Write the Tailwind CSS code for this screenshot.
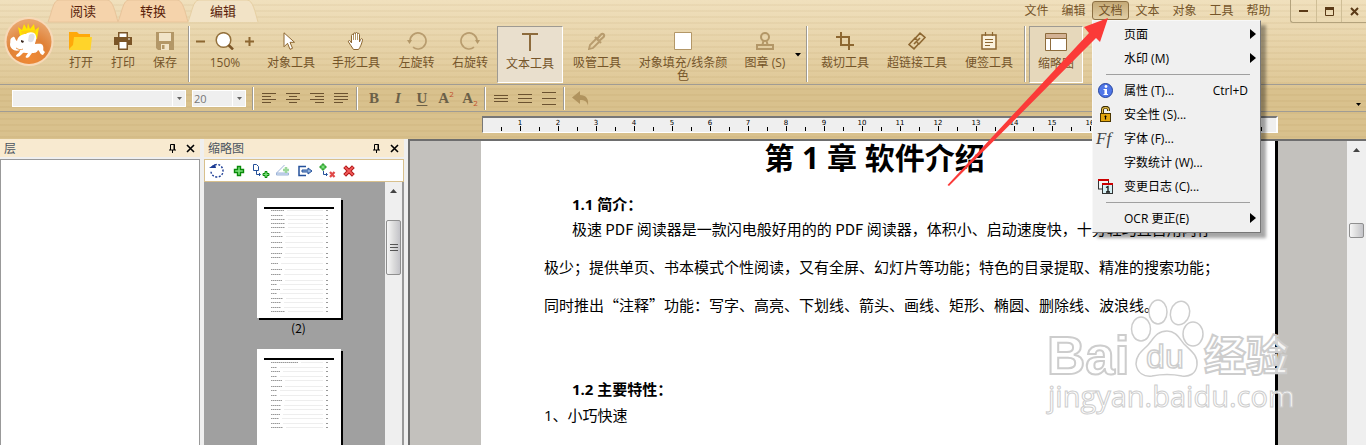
<!DOCTYPE html>
<html lang="zh-CN">
<head>
<meta charset="utf-8">
<title>极速 PDF 编辑器</title>
<script src="https://cdn.jsdelivr.net/npm/@tailwindcss/browser@4"></script>
</head>
<body class="h-screen overflow-hidden bg-[#efefef] font-['Open_Sans','Noto_Sans_CJK_SC',sans-serif] text-[12px] leading-[13px] text-[#75552a]">
<div class="relative flex h-full flex-col overflow-hidden">

  <header class="relative z-10 shrink-0 bg-[linear-gradient(#f0e0bd,#dfc897_84px,#d9c18d_90px,#d9c18d)]">
    <div class="pointer-events-none absolute inset-0 bg-[repeating-linear-gradient(transparent_0px,transparent_4px,rgba(130,90,20,0.05)_4px,rgba(130,90,20,0.05)_6px)]"></div>

    <div class="relative z-10 flex h-[84px]">
      <!-- application button -->
      <button class="mt-[17px] ml-[4px] h-[50px] w-[50px] shrink-0" aria-label="主菜单">
        <svg viewBox="0 0 50 50" class="h-[50px] w-[50px]">
          <defs><radialGradient id="lg" cx="50%" cy="85%" r="80%"><stop offset="0" stop-color="#f08a35"/><stop offset=".55" stop-color="#e08238"/><stop offset="1" stop-color="#e9a56c"/></radialGradient></defs>
          <circle cx="25" cy="24.500" r="24.500" fill="#f7d9b8"/>
          <circle cx="25" cy="24.500" r="22.500" fill="url(#lg)"/>
          <path d="M14 10l4 3 2-6 3 5 1-6 2 6 4-5 1 6 4-3-2 12-8 2-8-1z" fill="#ffe500"/>
          <path d="M17 14l15-1-1 6-12 2z" fill="#ffcf10"/>
          <path d="M9 20c2-1 2 3 4 4 1-5 5-7 9-7 2-2 9-3 10 2 1 4-1 6-1 8 4 0 7-1 8 2 1 3-1 4 2 6l-2 3c-3 0-3-4-5-5-1 3-4 3-6 3l-3 4c-3 2-4 0-3-1l2-3c-3 0-5-1-6 1-2 2-4 4-6 2 0-2 4-3 4-6-5 2-10-1-10-6 1-3-1-5 3-7z" fill="#fff"/>
          <path d="M25 18c4-3 7 0 5 4-1 4-4 4-6 2" fill="#dfe0e6"/>
          <path d="M17 23l3 1-1 2-2-1z" fill="#3c2a20"/><path d="M12 31c3 2 5 2 7 1" stroke="#e79a54" fill="none"/>
        </svg>
      </button>

      <div class="flex min-w-0 flex-1 flex-col">
        <div class="flex h-[26px] shrink-0 items-start">
          <nav class="-ml-[6px] flex text-[13px] text-[#5a1e0a]">
            <button class="relative h-[22px] w-[70px]"><svg class="absolute inset-0 overflow-visible" width="70" height="22"><path d="M0 22C4 12 5 0 11 0H59C65 0 67 12 70 22z" fill="#f5d3ab" stroke="#e8c49a"/></svg><span class="relative">阅读</span></button>
            <button class="relative h-[22px] w-[70px]"><svg class="absolute inset-0 overflow-visible" width="70" height="22"><path d="M0 22C4 12 5 0 11 0H59C65 0 67 12 70 22z" fill="#f5d3ab" stroke="#e8c49a"/></svg><span class="relative">转换</span></button>
            <button class="relative h-[22px] w-[70px]"><svg class="absolute inset-0 overflow-visible" width="70" height="22"><path d="M0 22C4 12 5 0 11 0H59C65 0 67 12 70 22" fill="#f2e3c6" stroke="#e6cfa2"/></svg><span class="relative">编辑</span></button>
          </nav>
          <div class="flex-1"></div>
          <nav class="flex h-[20px] items-center">
            <button class="h-[20px] w-[37px]">文件</button>
            <button class="h-[20px] w-[37px]">编辑</button>
            <div class="relative">
              <button class="mt-[1px] h-[19px] w-[37px] rounded-[3px] border border-[#8c7044] bg-[linear-gradient(#c4a976,#e2cfa6)]">文档</button>
              <!-- document menu -->
              <div role="menu" class="absolute top-[20px] left-0 w-[169px] border border-[#f8f8f8] border-r-[#777] border-b-[#777] bg-[#f0f0f0] pt-px pb-[2px] text-black shadow-[5px_5px_3px_rgba(0,0,0,0.35)]">
                <button role="menuitem" class="flex h-[24px] w-full items-center pr-[4px] pl-[31px]"><span class="flex-1 text-left">页面</span><svg width="6" height="10"><path d="M0 0l6 5-6 5z"/></svg></button>
                <button role="menuitem" class="flex h-[24px] w-full items-center pr-[4px] pl-[31px]"><span class="flex-1 text-left">水印 (M)</span><svg width="6" height="10"><path d="M0 0l6 5-6 5z"/></svg></button>
                <div class="mt-[4px] mr-[10px] mb-[3px] ml-[13px] h-px bg-[#a0a0a0]"></div>
                <button role="menuitem" class="flex h-[24px] w-full items-center pr-[12px] pl-[5px]">
                  <svg class="mr-[11px]" width="15" height="15" viewBox="0 0 15 15"><circle cx="7.500" cy="7.500" r="7" fill="#4f76e8" stroke="#24439c"/><circle cx="8" cy="3.500" r="1.400" fill="#fff"/><path d="M5.500 6H9v5h1v1H5.500v-1h1V7h-1z" fill="#fff"/></svg>
                  <span class="flex-1 text-left">属性 (T)...</span><span>Ctrl+D</span></button>
                <button role="menuitem" class="flex h-[24px] w-full items-center pl-[5px]">
                  <svg class="mr-[11px]" width="15" height="16" viewBox="0 0 15 16"><path d="M4.500 8V3.500c0-3 6-3 6 0V5" fill="none" stroke="#3a2a00" stroke-width="3"/><path d="M4.500 8V3.500c0-2.500 6-2.500 6 0V5" fill="none" stroke="#e8c44c" stroke-width="1.200"/><rect x="2.500" y="7.500" width="10" height="8" fill="#e3a60d" stroke="#4a3500"/><path d="M7.500 9.500v4M6.500 10.500h2" stroke="#000" stroke-width="1.200"/></svg>
                  安全性 (S)...</button>
                <button role="menuitem" class="flex h-[24px] w-full items-center pl-[3px]"><span class="w-[28px] text-left font-['Liberation_Serif',serif] text-[17px] text-[#444] italic">Ff</span>字体 (F)...</button>
                <button role="menuitem" class="flex h-[24px] w-full items-center pl-[31px]">字数统计 (W)...</button>
                <button role="menuitem" class="flex h-[24px] w-full items-center pl-[5px]">
                  <svg class="mr-[11px]" width="15" height="15" viewBox="0 0 15 15"><rect x=".5" y="1" width="10" height="9" fill="#f4f4f4" stroke="#333"/><path d="M0 1h11" stroke="#c00" stroke-width="2"/><rect x="4.500" y="5" width="10" height="9.500" fill="#d6f0f4" stroke="#333"/><path d="M4 5h11" stroke="#c00" stroke-width="2"/><path d="M8 8.500l2-1V13M8 13h4" stroke="#111" fill="none" stroke-width="1.300"/></svg>
                  变更日志 (C)...</button>
                <div class="mt-[4px] mr-[10px] mb-[3px] ml-[13px] h-px bg-[#a0a0a0]"></div>
                <button role="menuitem" class="flex h-[24px] w-full items-center pr-[4px] pl-[31px]"><span class="flex-1 text-left">OCR 更正(E)</span><svg width="6" height="10"><path d="M0 0l6 5-6 5z"/></svg></button>
              </div>
            </div>
            <button class="h-[20px] w-[37px]">文本</button>
            <button class="h-[20px] w-[37px]">对象</button>
            <button class="h-[20px] w-[37px]">工具</button>
            <button class="h-[20px] w-[37px]">帮助</button>
          </nav>
          <div class="ml-[13px] flex h-[23px] rounded-bl-[3px] border-b border-l border-[#b3a27c]">
            <button aria-label="最小化" class="grid w-[25px] place-items-center"><svg width="9" height="9"><path d="M0 4h9" stroke="#5b3a17" stroke-width="2"/></svg></button>
            <button aria-label="最大化" class="grid w-[25px] place-items-center border-l border-[#cfbe96]"><svg width="9" height="9"><path d="M.5 1h8v7.500h-8z" fill="none" stroke="#5b3a17"/><path d="M0 1.500h9" stroke="#5b3a17" stroke-width="3"/></svg></button>
            <button aria-label="关闭" class="grid w-[25px] place-items-center border-l border-[#cfbe96]"><svg width="9" height="9"><path d="M1 1l7 7M8 1L1 8" stroke="#5b3a17" stroke-width="2"/></svg></button>
          </div>
        </div>

        <!-- main toolbar -->
        <div class="ml-[6px] flex h-[57px] shrink-0 items-start">
          <button class="flex w-[42px] shrink-0 flex-col items-center gap-[6px] pt-[6px]"><svg width="24" height="18" viewBox="0 0 24 18"><path d="M0 0h8l2 2h11v15H0z" fill="#ffa90a"/><path d="M5 5h18l-1.500 13H0v-1L4 13z" fill="#ffd42a"/></svg>打开</button>
          <button class="flex w-[42px] shrink-0 flex-col items-center gap-[6px] pt-[6px]"><svg width="18" height="18" viewBox="0 0 18 18"><path d="M4 0h10v5H4z" fill="#7b5527"/><path d="M5.500 1.500h7V5h-7z" fill="#fff"/><path d="M0 5h18v8H0z" fill="#7b5527"/><path d="M4 9h10v9H4z" fill="#7b5527"/><path d="M5.500 10h7v6.500h-7z" fill="#fff"/><path d="M14 7h2" stroke="#fff"/></svg>打印</button>
          <button class="flex w-[42px] shrink-0 flex-col items-center gap-[6px] pt-[6px]"><svg width="18" height="18" viewBox="0 0 18 18"><path d="M0 0h18v18H2l-2-2z" fill="#b39767"/><path d="M3 1h12v8H3z" fill="#f1e4c8"/><path d="M5 12h8v6H5z" fill="#f1e4c8"/><path d="M6 13h2.500v4H6z" fill="#b39767"/></svg>保存</button>
          <div class="ml-[2px] h-[56px] w-[2px] shrink-0 border-r border-white bg-[#9e9a92]"></div>
          <div class="flex w-[70px] shrink-0 flex-col items-center gap-[6px] pt-[6px]">
            <div class="flex h-[18px] items-center gap-[10px]">
              <button aria-label="缩小"><svg width="9" height="9"><path d="M0 4.500h9" stroke="#8d6731" stroke-width="2"/></svg></button>
              <button aria-label="缩放"><svg width="20" height="18" viewBox="0 0 20 18"><circle cx="8.500" cy="8" r="7.300" fill="#fff" stroke="#94713c" stroke-width="1.500"/><path d="M13.500 13l4.500 4.500" stroke="#7b5527" stroke-width="2.500"/></svg></button>
              <button aria-label="放大"><svg width="9" height="9"><path d="M0 4.500h9M4.500 0v9" stroke="#8d6731" stroke-width="2"/></svg></button>
            </div>150%</div>
          <button class="flex w-[62px] shrink-0 flex-col items-center gap-[6px] pt-[6px]"><svg width="18" height="18" viewBox="0 0 18 18"><path d="M2 .8v14l3.500-3.500 2.500 6 2.500-1-2.500-6h4.500z" fill="#fff" stroke="#8d6731"/></svg>对象工具</button>
          <button class="flex w-[68px] shrink-0 flex-col items-center gap-[6px] pt-[6px]"><svg width="18" height="18" viewBox="0 0 18 18"><path d="M4.500 11V3.500c0-1.500 2-1.500 2 0V2c0-1.500 2-1.500 2 0V1.500c0-1.500 2-1.500 2 0V2.500c0-1.500 2-1.500 2 0V10l1-2.500c.7-1.500 2.500-.8 2 .7-1 4-2 6.500-4 9.300H6.500C5 15 3 12.500 1.500 10c-.7-1.500 1-2 1.800-1z" fill="#fff" stroke="#8d6731"/><path d="M6.500 3v5M8.500 2v6M10.500 2v6" stroke="#b39767"/></svg>手形工具</button>
          <button class="flex w-[53px] shrink-0 flex-col items-center gap-[6px] pt-[6px]"><svg width="20" height="18" viewBox="0 0 20 18"><path d="M3 9a8 8 0 1 1 3 6.200" fill="none" stroke="#b89c6e" stroke-width="1.700"/><path d="M0 8h5l-2.500 4z" fill="#b39767"/></svg>左旋转</button>
          <button class="flex w-[54px] shrink-0 flex-col items-center gap-[6px] pt-[6px]"><svg width="20" height="18" viewBox="0 0 20 18"><path d="M17 9a8 8 0 1 0-3 6.200" fill="none" stroke="#b89c6e" stroke-width="1.700"/><path d="M15 8h5l-2.500 4z" fill="#b39767"/></svg>右旋转</button>
          <button class="flex h-[57px] w-[66px] shrink-0 flex-col items-center gap-[6px] border border-white border-t-[#9e9a92] border-l-[#9e9a92] bg-[#e9dfcd] pt-[6px]"><svg width="16" height="18"><path d="M0 1h16M8 1v17" stroke="#8d6b3c" stroke-width="2" fill="none"/></svg>文本工具</button>
          <button class="flex w-[68px] shrink-0 flex-col items-center gap-[6px] pt-[6px]"><svg width="18" height="18" viewBox="0 0 18 18"><path d="M8 7l-6 6-1 4 4-1 6-6" fill="none" stroke="#b89c6e" stroke-width="1.800"/><path d="M7 5l6 6M9 7l4-4.500c2-2 4 .5 2.500 2.500L11 9" fill="none" stroke="#b89c6e" stroke-width="2.200"/></svg>吸管工具</button>
          <button class="flex w-[104px] shrink-0 flex-col items-center gap-[6px] px-[4px] pt-[6px]"><svg width="18" height="18"><path d="M.5.500h17v17H.5z" fill="#fff" stroke="#b39767"/></svg><span class="w-[92px] break-all">对象填充/线条颜色</span></button>
          <button class="flex w-[60px] shrink-0 flex-col items-center gap-[6px] pt-[6px]"><svg width="18" height="18" viewBox="0 0 18 18" fill="none" stroke="#b39767" stroke-width="2"><circle cx="9" cy="5" r="4"/><path d="M7.500 9l-1 3.500M10.500 9l1 3.500M1 13h16v4H1z"/></svg>图章 (S)</button>
          <button aria-label="图章选项" class="mt-[26px] h-[5px] w-[8px] shrink-0"><svg width="6" height="4"><path d="M0 0h6L3 3.500z" fill="#000"/></svg></button>
          <div class="ml-[3px] h-[56px] w-[2px] shrink-0 border-r border-white bg-[#9e9a92]"></div>
          <button class="ml-[2px] flex w-[70px] shrink-0 flex-col items-center gap-[6px] pt-[6px]"><svg width="18" height="18"><path d="M5 0v13h13M0 5h13v13" fill="none" stroke="#8d6731" stroke-width="2"/></svg>裁切工具</button>
          <button class="flex w-[74px] shrink-0 flex-col items-center gap-[6px] pt-[6px]"><svg width="18" height="18" viewBox="0 0 18 18" fill="none" stroke="#8d6731" stroke-width="1.600"><path d="M7.500 6l4.500-4.800 5 4.300-6 6.500-2-1.700M10.500 12l-4.500 4.800-5-4.300 6-6.500 2 1.700M6 12l6-6"/></svg>超链接工具</button>
          <button class="flex w-[70px] shrink-0 flex-col items-center gap-[6px] pt-[6px]"><svg width="18" height="18" viewBox="0 0 18 18"><path d="M2 3h14v14H2z" fill="#fbf2dd" stroke="#8d6731" stroke-width="1.500"/><path d="M5.500 0v4M12.500 0v4M5 7.500h8M5 10.500h8M5 13.500h5" stroke="#8d6731" stroke-width="1.200"/></svg>便签工具</button>
          <div class="h-[56px] w-[2px] shrink-0 border-r border-white bg-[#9e9a92]"></div>
          <button class="ml-[3px] flex h-[57px] w-[54px] shrink-0 flex-col items-center gap-[6px] border border-white border-t-[#9e9a92] border-l-[#9e9a92] bg-[#e6d8bb] pt-[6px]"><svg width="22" height="18"><path d="M.5.500h21v17H.5z" fill="#fff" stroke="#8d6b3c"/><path d="M1 1h20v4H1z" fill="#d3b294"/><path d="M1 5.500h20M5.500 6v12" stroke="#8d6b3c"/></svg>缩略图</button>
        </div>
      </div>
    </div>

    <!-- text format bar -->
    <div class="relative flex h-[28px] items-center border-t border-b border-[#a09c94] text-[#6b5230]">
      <div class="relative ml-[12px] flex h-[17px] w-[174px] border border-white bg-[#efefef]"><select aria-label="字体" class="w-full appearance-none pl-[2px] outline-none"><option></option></select><span class="pointer-events-none absolute top-0 right-0 grid h-full w-[13px] place-items-center border-l border-white"><svg width="5" height="3"><path d="M0 0h5L2.500 3z" fill="#666"/></svg></span></div>
      <div class="relative ml-[6px] flex h-[17px] w-[54px] border border-white bg-[#efefef]"><select aria-label="字号" class="w-full appearance-none pl-[1px] text-[11px] text-[#777] outline-none"><option>20</option></select><span class="pointer-events-none absolute top-0 right-0 grid h-full w-[13px] place-items-center border-l border-white"><svg width="5" height="3"><path d="M0 0h5L2.500 3z" fill="#666"/></svg></span></div>
      <div class="mr-[3px] ml-[6px] h-[23px] w-[2px] border-r border-white bg-[#9e9a92]"></div>
      <button class="grid w-[24px] place-items-center" aria-label="左对齐"><svg width="14" height="11" stroke="#6b5230"><path d="M0 .5h14M0 3.500h9M0 6.500h14M0 9.500h9"/></svg></button>
      <button class="grid w-[24px] place-items-center" aria-label="居中"><svg width="14" height="11" stroke="#6b5230"><path d="M0 .5h14M3 3.500h8M0 6.500h14M3 9.500h8"/></svg></button>
      <button class="grid w-[24px] place-items-center" aria-label="右对齐"><svg width="14" height="11" stroke="#6b5230"><path d="M0 .5h14M5 3.500h9M0 6.500h14M5 9.500h9"/></svg></button>
      <button class="grid w-[24px] place-items-center" aria-label="两端对齐"><svg width="14" height="11" stroke="#6b5230"><path d="M0 .5h14M0 3.500h14M0 6.500h14M0 9.500h9"/></svg></button>
      <div class="mr-[4px] ml-[3px] h-[23px] w-[2px] border-r border-white bg-[#9e9a92]"></div>
      <div class="flex font-['Liberation_Serif',serif] text-[15px] leading-[17px] font-bold text-[#6b6048]">
        <button class="w-[24px]" aria-label="粗体">B</button>
        <button class="w-[24px] italic" aria-label="斜体">I</button>
        <button class="w-[24px] underline underline-offset-2" aria-label="下划线">U</button>
        <button class="flex w-[24px] justify-center" aria-label="上标">A<span class="font-['Open_Sans',sans-serif] text-[8px] leading-[8px] font-normal text-[#c0502c]">2</span></button>
        <button class="flex w-[24px] items-end justify-center" aria-label="下标">A<span class="font-['Open_Sans',sans-serif] text-[8px] leading-[8px] font-normal text-[#c0502c]">2</span></button>
      </div>
      <div class="mr-[3px] ml-[2px] h-[23px] w-[2px] border-r border-white bg-[#9e9a92]"></div>
      <button class="grid w-[24px] place-items-center" aria-label="单倍行距"><svg width="14" height="13" stroke="#6b5230"><path d="M0 3.500h14M0 6.500h14M0 9.500h14"/></svg></button>
      <button class="grid w-[24px] place-items-center" aria-label="1.5 倍行距"><svg width="14" height="13" stroke="#6b5230"><path d="M0 2.500h14M0 6.500h14M0 10.500h14"/></svg></button>
      <button class="grid w-[24px] place-items-center" aria-label="双倍行距"><svg width="14" height="13" stroke="#6b5230"><path d="M0 .5h14M0 6.500h14M0 12.500h14"/></svg></button>
      <div class="mr-[7px] ml-[2px] h-[23px] w-[2px] border-r border-white bg-[#9e9a92]"></div>
      <button aria-label="撤销"><svg width="17" height="15" viewBox="0 0 17 15"><path d="M0 6.500L8 0v4c6 0 9 4 8 10.500-1-4-3-5.500-8-5.500v4z" fill="#b0935e"/></svg></button>
      <div class="flex-1"></div>
      <button aria-label="更多" class="mt-[12px] mr-[5px]"><svg width="5" height="3"><path d="M0 0h5L2.500 3z" fill="#000"/></svg></button>
    </div>

    <!-- horizontal ruler -->
    <div class="relative flex h-[27px] pt-[4px] pr-[88px] pl-[482px]">
      <div class="h-[17px] min-w-0 flex-1 overflow-hidden border-t-2 border-r-2 border-b border-l border-t-[#777] border-r-[#fff] border-b-[#fff] border-l-[#777] bg-[#efefef]">
        <svg id="ruler" class="h-[14px] w-full font-['DejaVu_Sans',sans-serif] text-[7px]"></svg>
      </div>
    </div>
  </header>

  <main class="relative flex min-h-0 flex-1">
    <!-- layers panel -->
    <section class="flex w-[200px] shrink-0 flex-col">
      <div class="flex h-[18px] shrink-0 items-center bg-[#f8ead0] pr-[5px] pl-[4px] text-[#4b5560]"><h2 class="flex-1">层</h2>
        <button aria-label="固定" class="mr-[9px]"><svg width="8" height="9"><path d="M1.500 6V.500h4V6M5 0v6M0 6h7M3.500 6v3" stroke="#000" fill="none"/></svg></button>
        <button aria-label="关闭层"><svg width="9" height="9"><path d="M1 1l7 7M8 1L1 8" stroke="#000" stroke-width="1.600"/></svg></button></div>
      <div class="mt-[2px] flex-1 border border-b-0 border-[#999] bg-white"></div>
    </section>

    <!-- thumbnails panel -->
    <section class="ml-[4px] flex w-[200px] shrink-0 flex-col">
      <div class="flex h-[18px] shrink-0 items-center bg-[#f8ead0] pr-[5px] pl-[4px] text-[#4b5560]"><h2 class="flex-1">缩略图</h2>
        <button aria-label="固定" class="mr-[9px]"><svg width="8" height="9"><path d="M1.500 6V.500h4V6M5 0v6M0 6h7M3.500 6v3" stroke="#000" fill="none"/></svg></button>
        <button aria-label="关闭缩略图"><svg width="9" height="9"><path d="M1 1l7 7M8 1L1 8" stroke="#000" stroke-width="1.600"/></svg></button></div>
      <div class="mt-[2px] flex h-[23px] shrink-0 items-center border border-[#d8c08c] bg-white pl-[4px]">
        <button aria-label="旋转" class="w-[22px]"><svg width="16" height="16" viewBox="0 0 16 16"><path d="M3 4c4-5 11-2 11 4 0 8-12 8-12 0" fill="none" stroke="#1c3c94" stroke-width="1.400" stroke-dasharray="2 1.500"/><path d="M0 5l6-4 1 4z" fill="#1c3c94"/></svg></button>
        <button aria-label="添加" class="w-[22px]"><svg width="16" height="16" viewBox="0 0 16 16"><path d="M6.500 3.500h3v3h3v3h-3v3h-3v-3h-3v-3h3z" fill="#7be07b" stroke="#0a8a0a" stroke-width="1.400"/></svg></button>
        <button aria-label="插入页" class="w-[22px]"><svg width="17" height="16" viewBox="0 0 17 16"><path d="M.500 1.500h3l2 2v4h-5zM3.500 8v3.500H7M6 10l1.500 1.500L6 13" fill="none" stroke="#24509a"/><path d="M12 8.500h2v2h2v2h-2v2h-2v-2h-2v-2h2z" fill="#7be07b" stroke="#0a8a0a"/></svg></button>
        <button aria-label="扫描" class="w-[22px]"><svg width="16" height="16" viewBox="0 0 16 16"><path d="M1.500 10l8-8M1.500 10h12v2h-12z" fill="#d7e3f4" stroke="#9db4d8"/><path d="M11 4v6M8 7h6" stroke="#9cd89c" stroke-width="2.500"/></svg></button>
        <button aria-label="导出" class="w-[22px]"><svg width="16" height="16" viewBox="0 0 16 16"><path d="M9 3.500H2v9h7" fill="none" stroke="#24509a" stroke-width="1.500"/><path d="M5 7h6V5l4 3-4 3V9H5z" fill="#8fb0dc" stroke="#24509a"/></svg></button>
        <button aria-label="替换" class="w-[23px]"><svg width="17" height="16" viewBox="0 0 17 16"><path d="M3 1h2v2h2v2H5v2H3V5H1V3h2z" fill="#7be07b" stroke="#0a8a0a" stroke-width=".8"/><path d="M4.500 8v3.500H8M7 10l1.500 1.500L7 13" fill="none" stroke="#24509a"/><path d="M11 9l4.500 5M15.500 9L11 14" stroke="#e04848" stroke-width="2.200"/></svg></button>
        <button aria-label="删除"><svg width="14" height="14" viewBox="0 0 16 16"><path d="M3 3l10 10M13 3L3 13" stroke="#b01818" stroke-width="4.500"/><path d="M3.500 3.500l9 9M12.500 3.500l-9 9" stroke="#f25a5a" stroke-width="2.200"/></svg></button>
      </div>
      <div class="flex min-h-0 flex-1 bg-[#a0a0a0]">
        <div class="flex flex-1 flex-col items-center overflow-hidden pt-[16px] pl-[8px] text-black">
          <svg data-thumb="0" class="h-[120px] w-[84px] shrink-0 bg-white shadow-[2px_2px_0_#000]"></svg>
          <span class="mt-[3px] mb-[15px] font-['Noto_Sans_CJK_SC',sans-serif] text-[12px]">(2)</span>
          <svg data-thumb="1" class="h-[120px] w-[84px] shrink-0 bg-white shadow-[2px_2px_0_#000]"></svg>
        </div>
        <div class="flex w-[17px] flex-col items-center bg-[#efefef]">
          <svg class="mt-[7px]" width="7" height="4"><path d="M0 4h7L3.500 0z" fill="#444"/></svg>
          <div class="mt-[27px] grid h-[55px] w-[15px] place-items-center rounded-[2px] border border-[#8f8f8f] bg-[linear-gradient(90deg,#f6f6f6,#dcdcdc_50%,#c3c3c8)]"><svg width="8" height="8"><path d="M0 .5h8M0 3.500h8M0 6.500h8" stroke="#555"/></svg></div>
        </div>
        <div class="w-[2px] bg-[#999]"></div>
      </div>
    </section>

    <!-- document view -->
    <section class="relative ml-[4px] flex min-w-0 flex-1 border-t-2 border-l-2 border-[#6e6e6e] bg-[#c3c1bd]">
      <article class="ml-[71px] min-w-0 flex-1 overflow-hidden border-r-[3px] border-black bg-white pl-[63px] text-[15px] leading-[38px] whitespace-nowrap text-black">
        <h1 class="-ml-[70px] text-center text-[30px] leading-[34px] font-bold">第 1 章 软件介绍</h1>
        <h2 class="mt-[17px] pl-[28px] leading-[24px] font-bold">1.1 简介：</h2>
        <p class="-mt-[6px] pl-[28px] font-['Noto_Sans_CJK_SC',sans-serif]">极速 PDF 阅读器是一款闪电般好用的的 PDF 阅读器，体积小、启动速度快，十分轻巧且占用内存</p>
        <p class="font-['Noto_Sans_CJK_SC',sans-serif]">极少；提供单页、书本模式个性阅读，又有全屏、幻灯片等功能；特色的目录提取、精准的搜索功能；</p>
        <p class="font-['Noto_Sans_CJK_SC',sans-serif]">同时推出“注释”功能：写字、高亮、下划线、箭头、画线、矩形、椭圆、删除线、波浪线。</p>
        <h2 class="mt-[52px] pl-[28px] leading-[26px] font-bold">1.2 主要特性：</h2>
        <p class="leading-[26px]">1、小巧快速</p>
      </article>
      <div class="ml-[69px] flex w-[19px] shrink-0 flex-col items-center bg-[#efefef]">
        <svg class="mt-[7px]" width="7" height="4"><path d="M0 4h7L3.500 0z" fill="#444"/></svg>
        <div class="mt-[71px] h-[15px] w-[15px] rounded-[2px] border border-[#8f8f8f] bg-[linear-gradient(90deg,#f6f6f6,#dcdcdc_50%,#c3c3c8)]"></div>
      </div>

      <!-- site watermark -->
      <svg class="pointer-events-none absolute right-[66px] bottom-[25px] h-[125px] w-[260px]" viewBox="1040 295 260 125" fill="#fff" fill-opacity=".85" stroke="#cdcdcd" stroke-width="1.500">
        <g class="font-['Liberation_Sans','Noto_Sans_CJK_SC',sans-serif] font-bold">
          <text x="1047" y="374" font-size="53" stroke-width="2">Bai</text>
          <text x="1204" y="371" font-size="42" stroke-width="2">经验</text>
        </g>
        <ellipse cx="1158" cy="312" rx="9" ry="12"/><ellipse cx="1180" cy="313" rx="9.500" ry="12" transform="rotate(15 1180 313)"/>
        <ellipse cx="1141" cy="329" rx="9.500" ry="12"/><ellipse cx="1193" cy="334" rx="10" ry="12"/>
        <path d="M1167 331c9 0 12 7 17 13 7 7 14 11 13 21-1 9-8 12-15 11-10-2-20-2-30 0-8 1-15-3-16-12 0-9 6-13 12-19 6-7 9-14 19-14z"/>
        <text x="1146" y="368" font-size="34" class="font-['Liberation_Sans',sans-serif]">du</text>
        <text x="1048" y="407" font-size="29" stroke-width="1" class="font-['Open_Sans',sans-serif]">jingyan.baidu.com</text>
      </svg>
    </section>
  </main>

  <!-- pointer arrow to the document menu -->
  <svg class="pointer-events-none absolute top-0 right-0 z-20 h-[200px] w-[426px]" viewBox="940 0 426 200"><path d="M947.500 185L1089 33l-5-6 24-9-8 24-4-4L949 186z" fill="#fb3a38"/></svg>
</div>

<script>
const NS = 'http://www.w3.org/2000/svg';
function add(svg, tag, attrs, text) {
  const el = document.createElementNS(NS, tag);
  for (const k in attrs) el.setAttribute(k, attrs[k]);
  if (text) el.textContent = text;
  svg.appendChild(el);
}
// Ruler: one unit is 38px, with a tick at every half unit
const ruler = document.getElementById('ruler');
for (let i = 1; i * 19 < ruler.clientWidth - 6; i++) {
  const x = i * 19 - 1;
  add(ruler, 'path', { d: i % 2 ? `M${x + .5} 9v4` : `M${x + .5} 8v5`, stroke: '#000' });
  if (i % 2 === 0) add(ruler, 'text', { x: x, y: 7, 'text-anchor': 'middle' }, String(i / 2));
}
// Thumbnails: table-of-contents rows as title, leader and page number
const rows = [
  [[12,13],[17,12],[21,14],[25,14],[29,14],[34,10],[38,12],[44,11],[49,12],[55,11],[59,10],[65,7],[71,11],[76,10],[82,11],[86,6],[91,9],[95,6],[100,12],[104,10],[109,10],[113,14]],
  [[13,27],[18,6],[22,9],[27,6],[31,11],[37,11],[41,6],[46,6],[51,11],[56,10],[60,10],[65,9],[69,8],[74,9],[78,12]]
];
document.querySelectorAll('[data-thumb]').forEach(s => {
  add(s, 'path', { d: 'M7 10h70', stroke: '#000', 'stroke-width': 2 });
  rows[+s.dataset.thumb].forEach(([y, w]) => {
    add(s, 'path', { d: `M14 ${y + .5}h${w}`, stroke: '#999', 'stroke-dasharray': '1.5 .5' });
    add(s, 'path', { d: `M${17 + w} ${y + .5}H66`, stroke: '#eee' });
    add(s, 'path', { d: `M69 ${y + .5}h2`, stroke: '#999' });
  });
});
</script>
</body>
</html>
